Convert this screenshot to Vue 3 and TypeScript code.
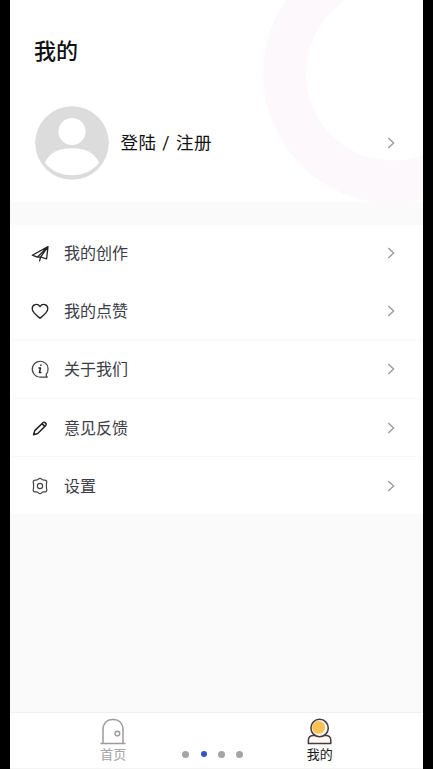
<script setup lang="ts">
interface MenuItem {
  id: string
  label: string
}

const items: MenuItem[] = [
  { id: 'works', label: '我的创作' },
  { id: 'likes', label: '我的点赞' },
  { id: 'about', label: '关于我们' },
  { id: 'feedback', label: '意见反馈' },
  { id: 'settings', label: '设置' },
]

const pages: number[] = [0, 1, 2, 3]
const activePage = 1
</script>

<template>
  <div class="stage">
    <main class="screen">
      <header class="profile">
        <svg class="ring" viewBox="0 0 161 203" fill="none">
          <circle cx="131" cy="73.5" r="108.5" stroke="#fdf8fb" stroke-width="43" />
        </svg>
        <h1 class="title">我的</h1>
        <div class="account">
          <svg class="avatar" viewBox="0 0 74 74">
            <circle cx="37" cy="37" r="36.8" fill="#dcdcdc" />
            <circle cx="37" cy="25.5" r="13.6" fill="#fff" />
            <path d="M9.8 56.5C15 46 24 42.2 37 42.2S59 46 64.2 56.5C57 65.5 48 69.3 37 69.3S17 65.5 9.8 56.5Z" fill="#fff" />
          </svg>
          <span class="login">登陆 / 注册</span>
          <svg class="chevron" viewBox="0 0 8 12"><path d="M1.3 1 6.6 6 1.3 11" /></svg>
        </div>
      </header>

      <nav class="menu">
        <div v-for="item in items" :key="item.id" class="row" :class="item.id">
          <svg class="icon" viewBox="0 0 20 20">
            <g v-if="item.id === 'works'">
              <path d="M18 3.6 2.3 12.2 7.3 14.2 18 3.6 16.6 15.8 10.6 14 18 3.6M7.3 14.2 10.6 14 9.6 17.8" />
            </g>
            <path v-else-if="item.id === 'likes'" d="M10 17.3C7.6 15.3 2.2 11.7 2.2 7.6 2.2 3 7.8 2.1 10 5.6 12.2 2.1 17.8 3 17.8 7.6 17.8 11.7 12.4 15.3 10 17.3Z" />
            <g v-else-if="item.id === 'about'" class="thin">
              <path d="M16.1 15.5C19.2 11.8 18.5 6.6 15.2 4.1A7.9 7.9 0 1 0 10.2 18.1H17.3Q16 17 16.1 15.5Z" />
              <path class="info" d="M9 9H10.5L9.4 13.5H10.9M10.9 6V6.4" />
            </g>
            <g v-else-if="item.id === 'feedback'" class="bold">
              <path d="M3.6 16.8 4.8 12.6 12.9 4.7Q14.1 3.6 15.5 4.9 16.9 6.3 15.8 7.5L7.7 15.5ZM12 5.6 14.8 8.4" />
            </g>
            <g v-else class="thin">
              <path d="M8.4 3.2Q10 1.5 11.6 3.2 12.7 4.4 14.4 4.1 16.7 3.9 16.8 6.1 16.4 7.6 16.4 10T16.8 13.9Q16.7 16.1 14.4 15.9 12.7 15.6 11.6 16.8 10 18.5 8.4 16.8 7.3 15.6 5.6 15.9 3.3 16.1 3.2 13.9 3.6 12.4 3.6 10T3.2 6.1Q3.3 3.9 5.6 4.1 7.3 4.4 8.4 3.2Z" />
              <circle cx="10" cy="10" r="2.6" />
            </g>
          </svg>
          <span class="label">{{ item.label }}</span>
          <svg class="chevron" viewBox="0 0 8 12"><path d="M1.3 1 6.6 6 1.3 11" /></svg>
        </div>
      </nav>

      <footer class="tabs">
        <div class="tab">
          <svg class="tab-icon" viewBox="0 0 28 28" fill="none" stroke="#9c9c9c" stroke-width="1.5">
            <path d="M1.5 25.5H26.5M4 25.5V12C4 5.5 7.8 1.5 14 1.5S24 5.5 24 12V25.5" />
            <circle cx="18.4" cy="15.6" r="2.3" />
          </svg>
          <span class="tab-text">首页</span>
        </div>
        <div class="tab current">
          <svg class="tab-icon" viewBox="0 0 28 28" fill="none" stroke="#443a40" stroke-width="1.5">
            <path d="M2.4 25.6V22C2.4 19.2 4.6 17.4 7.4 17.4H19.8C22.6 17.4 24.8 19.2 24.8 22V25.6Z" fill="#fff8f2" />
            <circle cx="13.6" cy="10" r="8.7" fill="#fff8f2" />
            <circle cx="12.6" cy="9.4" r="6.4" fill="#f9c252" stroke="none" />
          </svg>
          <span class="tab-text">我的</span>
        </div>
        <div class="dots">
          <i v-for="page in pages" :key="page" class="dot" :class="{ on: page === activePage }"></i>
        </div>
      </footer>
    </main>
  </div>
</template>

<style>
body {
  background: #000;
}
</style>

<style scoped>
.stage {
  height: 769px;
  padding: 0 10px;
  background: #000;
  box-sizing: border-box;
  font-family: "Noto Sans CJK SC", sans-serif;
}
.screen {
  height: 100%;
  display: flex;
  flex-direction: column;
  background: #fafafa;
}
.profile {
  position: relative;
  box-sizing: border-box;
  height: 202px;
  padding: 33px 28px 0 24px;
  background: #fff;
}
.ring {
  position: absolute;
  top: 0;
  right: 0;
  width: 161px;
  height: 203px;
}
.title {
  position: relative;
  margin: 0;
  font-size: 22px;
  line-height: 32px;
  font-weight: 500;
  color: #101010;
}
.account {
  position: relative;
  display: flex;
  align-items: center;
  margin-top: 41px;
  height: 74px;
}
.avatar {
  width: 74px;
  height: 74px;
  margin-left: 1px;
}
.login {
  flex: 1;
  margin-left: 11.5px;
  font-family: Roboto, "Noto Sans CJK SC", sans-serif;
  font-size: 17.5px;
  line-height: 26px;
  letter-spacing: 0.5px;
  word-spacing: 1px;
  color: #111;
}
.chevron {
  width: 8px;
  height: 12px;
  margin-right: 0.5px;
  fill: none;
  stroke: #999;
  stroke-width: 1.3;
}
.menu {
  margin-top: 23px;
  background: #fff;
}
.row {
  display: flex;
  align-items: center;
  box-sizing: border-box;
  height: 58.2px;
  padding: 0 28px 0 20px;
  border-bottom: 1px solid #f8f8f8;
}
.works {
  height: 57.6px;
  border-color: transparent;
}
.icon {
  width: 20px;
  height: 20px;
  fill: none;
  stroke: #222;
  stroke-width: 1.3;
  stroke-linejoin: round;
  stroke-linecap: round;
}
.thin {
  stroke: #444;
  stroke-width: 1.2;
}
.bold {
  stroke-width: 1.5;
}
.info {
  stroke: #222;
  stroke-width: 1.4;
}
.label {
  flex: 1;
  margin-left: 14px;
  padding-bottom: 2px;
  font-size: 16px;
  line-height: 24px;
  color: #3c3c48;
}
.tabs {
  position: relative;
  display: flex;
  box-sizing: border-box;
  height: 57px;
  margin-top: auto;
  padding-top: 5px;
  background: #fff;
  border-top: 1px solid #f1f1f1;
  border-bottom: 1px solid #f4f4f4;
}
.tab {
  flex: 1;
  display: flex;
  flex-direction: column;
  align-items: center;
  font-size: 13px;
  color: #a3a3a3;
}
.tab-text {
  line-height: 16px;
}
.current {
  color: #181818;
}
.tab-icon {
  width: 28px;
  height: 28px;
}
.dots {
  position: absolute;
  left: 172px;
  top: 37.5px;
  display: flex;
  gap: 11px;
}
.dot {
  width: 7px;
  height: 7px;
  border-radius: 50%;
  background: #a5a5a5;
}
.on {
  width: 6px;
  height: 6px;
  margin: 0.5px;
  background: #2f54c8;
}
</style>
